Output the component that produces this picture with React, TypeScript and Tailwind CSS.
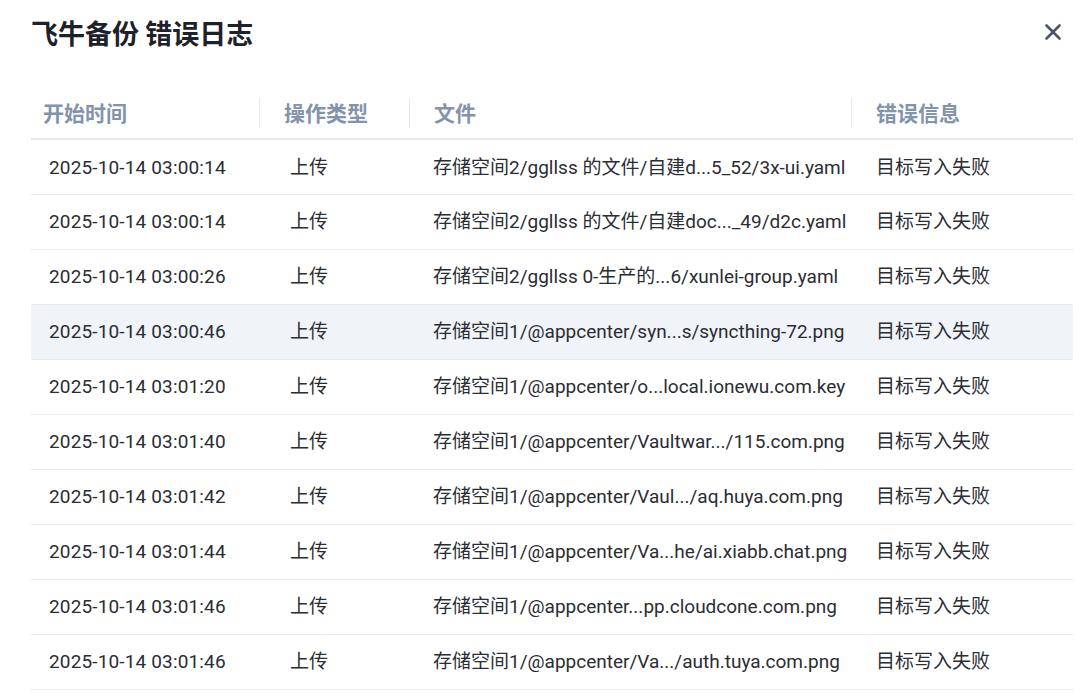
import { X } from "lucide-react";

interface LogRow {
  time: string;
  op: string;
  file: string;
  error: string;
}

const rows: LogRow[] = [
  { time: "2025-10-14 03:00:14", op: "上传", file: "存储空间2/ggllss 的文件/自建d...5_52/3x-ui.yaml", error: "目标写入失败" },
  { time: "2025-10-14 03:00:14", op: "上传", file: "存储空间2/ggllss 的文件/自建doc..._49/d2c.yaml", error: "目标写入失败" },
  { time: "2025-10-14 03:00:26", op: "上传", file: "存储空间2/ggllss 0-生产的...6/xunlei-group.yaml", error: "目标写入失败" },
  { time: "2025-10-14 03:00:46", op: "上传", file: "存储空间1/@appcenter/syn...s/syncthing-72.png", error: "目标写入失败" },
  { time: "2025-10-14 03:01:20", op: "上传", file: "存储空间1/@appcenter/o...local.ionewu.com.key", error: "目标写入失败" },
  { time: "2025-10-14 03:01:40", op: "上传", file: "存储空间1/@appcenter/Vaultwar.../115.com.png", error: "目标写入失败" },
  { time: "2025-10-14 03:01:42", op: "上传", file: "存储空间1/@appcenter/Vaul.../aq.huya.com.png", error: "目标写入失败" },
  { time: "2025-10-14 03:01:44", op: "上传", file: "存储空间1/@appcenter/Va...he/ai.xiabb.chat.png", error: "目标写入失败" },
  { time: "2025-10-14 03:01:46", op: "上传", file: "存储空间1/@appcenter...pp.cloudcone.com.png", error: "目标写入失败" },
  { time: "2025-10-14 03:01:46", op: "上传", file: "存储空间1/@appcenter/Va.../auth.tuya.com.png", error: "目标写入失败" },
];

const cjk = { fontFamily: '"Noto Sans CJK SC", "Noto Sans", sans-serif' };
const cell = { fontFamily: 'Roboto, "Noto Sans CJK SC", sans-serif' };

export default function App() {
  // hovered row in the screenshot
  const hovered = 3;

  return (
    <div className="w-[1089px] h-[699px] overflow-hidden bg-white" style={cjk}>
      <div className="flex items-center justify-between pl-[31px] pr-[23px] h-[64px]">
        <h1 className="text-[27px] font-bold text-[#1d2129] leading-none">飞牛备份 错误日志</h1>
        <button className="text-[#4b5567]">
          <X className="w-[26px] h-[26px]" strokeWidth={2.4} />
        </button>
      </div>

      <div className="pl-[31px] pt-[26px]">
        <table className="w-[1042px] table-fixed border-collapse">
          <colgroup>
            <col className="w-[228px]" />
            <col className="w-[150px]" />
            <col className="w-[442px]" />
            <col className="w-[222px]" />
          </colgroup>
          <thead>
            <tr className="h-[49px] border-b-2 border-[#e3e8ef] text-[21px] font-bold text-[#8293ab]">
              <th className="text-left font-bold pl-3 pb-[2px]">开始时间</th>
              <th className="text-left font-bold pl-6 pb-[2px]">
                <div className="flex items-center -ml-6">
                  <span className="w-px h-[30px] bg-[#e5e8ec] mr-6" />
                  操作类型
                </div>
              </th>
              <th className="text-left font-bold pl-6 pb-[2px]">
                <div className="flex items-center -ml-6">
                  <span className="w-px h-[30px] bg-[#e5e8ec] mr-6" />
                  文件
                </div>
              </th>
              <th className="text-left font-bold pl-6 pb-[2px]">
                <div className="flex items-center -ml-6">
                  <span className="w-px h-[30px] bg-[#e5e8ec] mr-6" />
                  错误信息
                </div>
              </th>
            </tr>
          </thead>
          <tbody style={cell}>
            {rows.map((r, i) => (
              <tr
                key={i}
                className={`h-[55px] border-b border-[#e6eaf0] text-[19px] text-[#2a2d33] ${
                  i === hovered ? "bg-[#f0f3f8]" : ""
                }`}
              >
                <td className="pl-[18px] pt-[2px] whitespace-nowrap tracking-[0.15px]">{r.time}</td>
                <td className="pl-[31px] pt-[2px] whitespace-nowrap">{r.op}</td>
                <td className="pl-6 pt-[2px] whitespace-nowrap overflow-hidden">{r.file}</td>
                <td className="pl-[25px] pt-[2px] whitespace-nowrap">{r.error}</td>
              </tr>
            ))}
          </tbody>
        </table>
      </div>
    </div>
  );
}
